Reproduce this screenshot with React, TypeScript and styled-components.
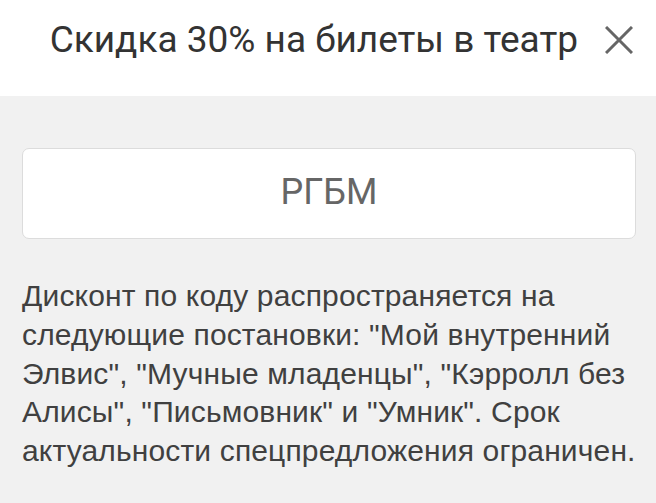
import React from "react";
import styled, { createGlobalStyle } from "styled-components";

const GlobalStyle = createGlobalStyle`
  html, body {
    margin: 0;
    padding: 0;
    background: #f1f1f1;
  }
  body {
    font-family: Roboto, "Noto Sans", sans-serif;
  }
`;

const Page = styled.div`
  width: 656px;
  min-height: 503px;
  background: #f1f1f1;
`;

const Header = styled.header`
  height: 96px;
  background: #ffffff;
  display: flex;
  align-items: center;
  justify-content: flex-end;
  padding: 0 22px 16px 46px;
  box-sizing: border-box;
  gap: 26px;
`;

const Title = styled.h1`
  margin: 0;
  font-size: 37px;
  font-weight: 400;
  line-height: 44px;
  color: #333333;
  white-space: nowrap;
`;

const CloseButton = styled.button`
  border: none;
  background: none;
  padding: 0;
  width: 30px;
  height: 30px;
  display: flex;
  align-items: center;
  justify-content: center;
  cursor: pointer;
`;

const Body = styled.main`
  padding: 52px 20px 0 22px;
`;

const CodeBox = styled.div`
  height: 91px;
  padding-bottom: 4px;
  background: #ffffff;
  border: 1px solid #dcdcdc;
  border-radius: 7px;
  box-sizing: border-box;
  display: flex;
  align-items: center;
  justify-content: center;
  font-size: 36px;
  color: #666666;
`;

const Note = styled.p`
  margin: 38px -2px 0 0;
  font-family: "Liberation Sans", Arial, sans-serif;
  font-size: 30px;
  letter-spacing: 0.15px;
  line-height: 38.75px;
  color: #404040;
`;

const App = () => {
  return (
    <Page>
      <GlobalStyle />
      <Header>
        <Title>Скидка 30% на билеты в театр</Title>
        <CloseButton aria-label="Закрыть">
          <svg width="28" height="28" viewBox="0 0 28 28">
            <path d="M1 1 L27 27 M27 1 L1 27" stroke="#666" strokeWidth="3" />
          </svg>
        </CloseButton>
      </Header>
      <Body>
        <CodeBox>РГБМ</CodeBox>
        <Note>
          Дисконт по коду распространяется на следующие постановки: "Мой
          внутренний Элвис", "Мучные младенцы", "Кэрролл без Алисы",
          "Письмовник" и "Умник". Срок актуальности спецпредложения ограничен.
        </Note>
      </Body>
    </Page>
  );
};

export default App;
